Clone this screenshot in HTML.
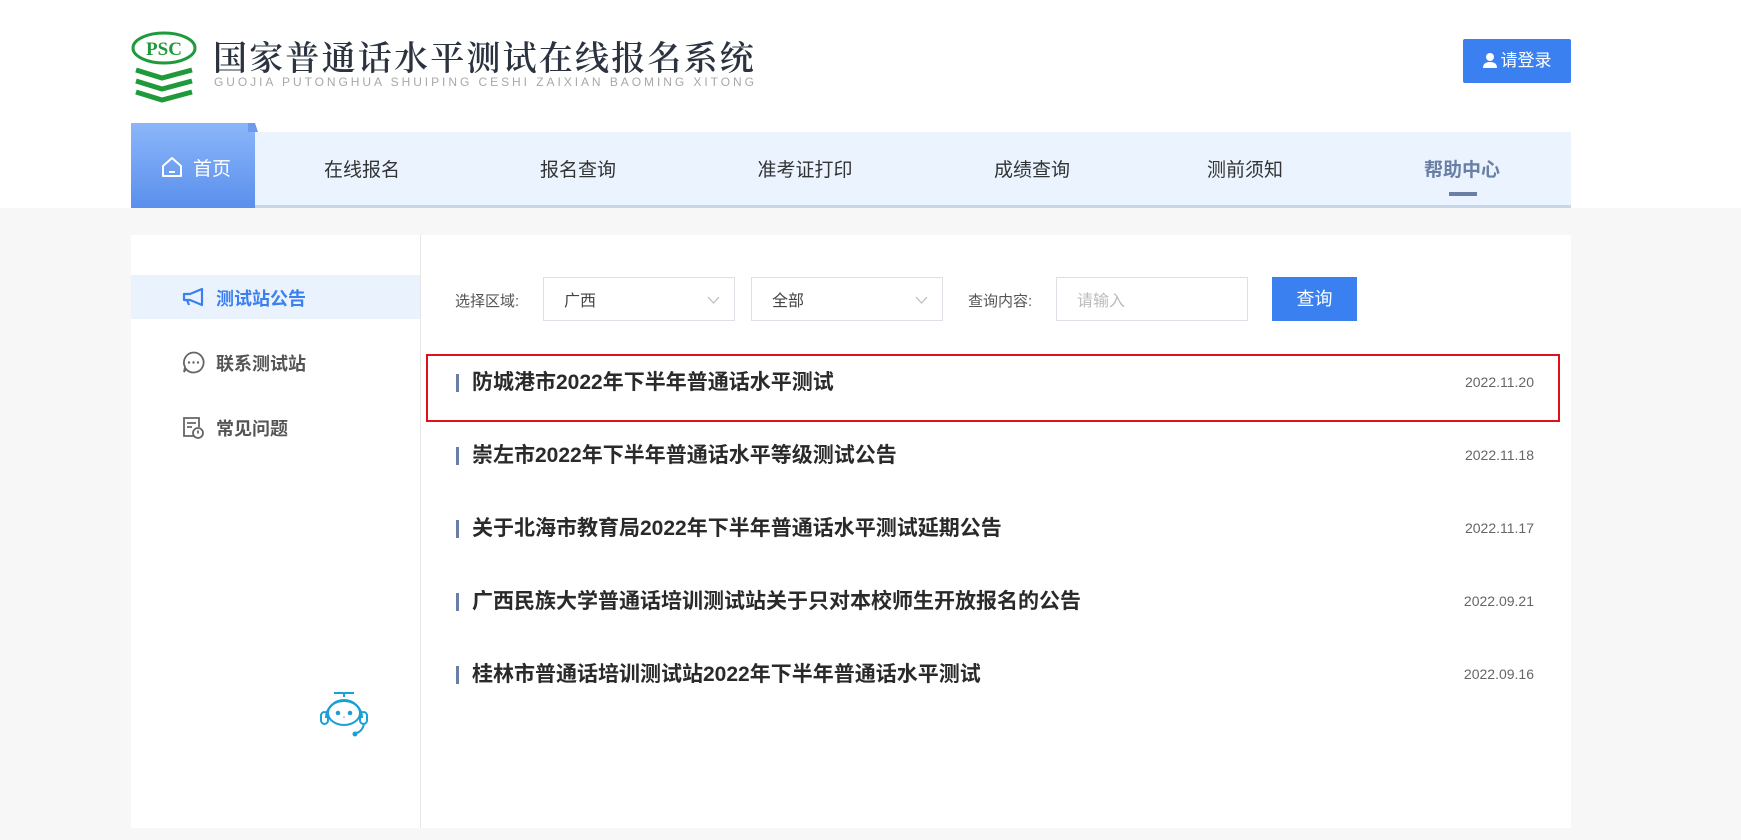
<!DOCTYPE html>
<html><head><meta charset="utf-8">
<style>
*{margin:0;padding:0;box-sizing:border-box}
body{width:1741px;height:840px;background:#f7f7f7;font-family:"Liberation Sans","Noto Sans CJK SC",sans-serif;position:relative;overflow:hidden;color:#333}
.top{position:absolute;left:0;top:0;width:1741px;height:208px;background:#fff}
.abs{position:absolute}
.title{left:213px;top:35px;font-size:34px;letter-spacing:2.2px;color:#2b3340;white-space:nowrap;font-family:"Noto Serif CJK SC","Noto Sans CJK SC",serif;font-weight:600;line-height:42px}
.sub{left:214px;top:75px;font-size:12px;letter-spacing:2.95px;color:#a8a8a8;white-space:nowrap}
.login{left:1463px;top:39px;width:108px;height:44px;background:#3a80f0;border-radius:2px;color:#fff;font-size:17px;line-height:44px;text-align:center}
.nav{left:131px;top:132px;width:1440px;height:76px;background:#ebf4fe;border-bottom:3px solid #c7d6e6}
.home{left:131px;top:123px;width:124px;height:85px;background:linear-gradient(#8cb6fa,#5a8fec);color:#fff;font-size:19px}
.navi{top:155px;font-size:19px;color:#333;white-space:nowrap;transform:translateX(-50%)}
.panel{left:131px;top:235px;width:1440px;height:593px;background:#fff}
.side{left:131px;top:235px;width:290px;height:593px;border-right:1px solid #e6e6e6}
.si{left:131px;width:289px;height:44px;font-size:18px;font-weight:bold;color:#555}
.si span{position:absolute;left:85px;top:10px}
.lbl{font-size:15px;color:#555;top:290px}
.sel{top:277px;height:44px;border:1px solid #dcdfe6;background:#fff;font-size:16px;color:#444;padding:9px 20px}
.btn{left:1272px;top:277px;width:85px;height:44px;background:#3a80f0;color:#fff;font-size:18px;text-align:center;line-height:44px}
.row{left:456px;width:1078px;height:30px}
.row .bar{position:absolute;left:0;top:6px;width:3px;height:18px;background:#6a7fa6}
.row .t{position:absolute;left:16px;top:0;font-size:21px;font-weight:bold;color:#2a2a2a;white-space:nowrap;line-height:30px}
.row .d{position:absolute;right:0;top:6px;font-size:14px;color:#666}
</style></head><body>
<div class="top"></div>
<svg class="abs" style="left:131px;top:31px" width="66" height="72" viewBox="0 0 66 72">
<ellipse cx="33" cy="17" rx="31" ry="15" fill="none" stroke="#1f9a3a" stroke-width="3"/>
<text x="33" y="24" text-anchor="middle" font-family="Liberation Serif" font-weight="bold" font-size="19" fill="#1f9a3a">PSC</text>
<g stroke="#1f9a3a" stroke-width="5" fill="none">
<path d="M5 39 L31 47 L61 39"/><path d="M5 50 L31 58 L61 50"/><path d="M5 61 L31 69 L61 61"/>
</g></svg>
<div class="abs title">国家普通话水平测试在线报名系统</div>
<div class="abs sub">GUOJIA PUTONGHUA SHUIPING CESHI ZAIXIAN BAOMING XITONG</div>
<div class="abs login"><svg width="14" height="15" viewBox="0 0 14 15" style="vertical-align:-2px;margin-right:4px"><circle cx="7" cy="4" r="4" fill="#fff"/><path d="M0 15 Q0 9 7 9 Q14 9 14 15Z" fill="#fff"/></svg>请登录</div>
<div class="abs nav"></div>
<div class="abs home">
<svg class="abs" style="left:117px;top:0" width="10" height="9"><path d="M0 0 L7 0 L10 9 L0 9Z" fill="#6d9bea"/></svg>
<svg class="abs" style="left:30px;top:33px" width="22" height="22" viewBox="0 0 22 22"><path d="M2 10 L11 2 L20 10 L20 20 L2 20Z" fill="none" stroke="#fff" stroke-width="2" stroke-linejoin="round"/><path d="M8 16h6" stroke="#fff" stroke-width="2"/></svg>
<span class="abs" style="left:62px;top:31px">首页</span></div>
<div class="abs navi" style="left:362px">在线报名</div>
<div class="abs navi" style="left:578px">报名查询</div>
<div class="abs navi" style="left:805px">准考证打印</div>
<div class="abs navi" style="left:1032px">成绩查询</div>
<div class="abs navi" style="left:1245px">测前须知</div>
<div class="abs navi" style="left:1462px;font-weight:bold;color:#6a7fa6">帮助中心</div>
<div class="abs" style="left:1449px;top:192px;width:28px;height:4px;background:#6a7fa6"></div>

<div class="abs panel"></div>
<div class="abs side"></div>
<div class="abs si" style="top:275px;background:#eaf2fd;color:#3a80f0">
<svg class="abs" style="left:51px;top:12px" width="22" height="20" viewBox="0 0 22 20"><path d="M20 2 L20 18 L8 13 L2 13 L2 7 L8 7Z" fill="none" stroke="#3a80f0" stroke-width="2.2" stroke-linejoin="round"/><path d="M5 13 L7 18" stroke="#3a80f0" stroke-width="2.2"/></svg><span>测试站公告</span></div>
<div class="abs si" style="top:340px">
<svg class="abs" style="left:51px;top:11px" width="23" height="23" viewBox="0 0 23 23"><path d="M11.5 1.5 A10 10 0 1 1 4 18 L2 21 L3 16 A10 10 0 0 1 11.5 1.5Z" fill="none" stroke="#666" stroke-width="1.8"/><circle cx="7" cy="11.5" r="1.2" fill="#666"/><circle cx="11.5" cy="11.5" r="1.2" fill="#666"/><circle cx="16" cy="11.5" r="1.2" fill="#666"/></svg><span>联系测试站</span></div>
<div class="abs si" style="top:405px">
<svg class="abs" style="left:51px;top:11px" width="22" height="23" viewBox="0 0 22 23"><path d="M13 20 L2 20 L2 2 L17 2 L17 11" fill="none" stroke="#666" stroke-width="1.8"/><path d="M5 7h9M5 11h5" stroke="#666" stroke-width="1.8"/><circle cx="16" cy="17" r="5" fill="#fff" stroke="#666" stroke-width="1.8"/><path d="M16 14.5v3" stroke="#666" stroke-width="1.8"/></svg><span>常见问题</span></div>
<svg class="abs" style="left:320px;top:692px" width="60" height="50" viewBox="0 0 60 50">
<g fill="none" stroke="#1aa0d4" stroke-width="2"><path d="M14 1h20"/><path d="M24 1v4"/><ellipse cx="24" cy="21" rx="16" ry="12"/><path d="M6 26 A18 18 0 0 1 42 26"/><rect x="1" y="20" width="7" height="12" rx="3.5"/><rect x="40" y="20" width="7" height="12" rx="3.5"/><path d="M44 32 Q42 40 36 41"/></g>
<circle cx="35" cy="42" r="2.5" fill="#1aa0d4"/><circle cx="18" cy="21" r="2.3" fill="#1aa0d4"/><circle cx="30" cy="21" r="2.3" fill="#1aa0d4"/><circle cx="24" cy="25" r="0.8" fill="#e66"/></svg>

<div class="abs lbl" style="left:455px">选择区域:</div>
<div class="abs sel" style="left:543px;width:192px">广西<svg class="abs" style="right:14px;top:18px" width="13" height="8"><path d="M1 1 L6.5 7 L12 1" fill="none" stroke="#bbb" stroke-width="1.2"/></svg></div>
<div class="abs sel" style="left:751px;width:192px">全部<svg class="abs" style="right:14px;top:18px" width="13" height="8"><path d="M1 1 L6.5 7 L12 1" fill="none" stroke="#bbb" stroke-width="1.2"/></svg></div>
<div class="abs lbl" style="left:968px">查询内容:</div>
<div class="abs sel" style="left:1056px;width:192px;color:#bbb">请输入</div>
<div class="abs btn">查询</div>

<div class="abs" style="left:426px;top:354px;width:1134px;height:68px;border:2px solid #e0101a"></div>
<div class="abs row" style="top:368px"><div class="bar"></div><div class="t">防城港市2022年下半年普通话水平测试</div><div class="d">2022.11.20</div></div>
<div class="abs row" style="top:441px"><div class="bar"></div><div class="t">崇左市2022年下半年普通话水平等级测试公告</div><div class="d">2022.11.18</div></div>
<div class="abs row" style="top:514px"><div class="bar"></div><div class="t">关于北海市教育局2022年下半年普通话水平测试延期公告</div><div class="d">2022.11.17</div></div>
<div class="abs row" style="top:587px"><div class="bar"></div><div class="t">广西民族大学普通话培训测试站关于只对本校师生开放报名的公告</div><div class="d">2022.09.21</div></div>
<div class="abs row" style="top:660px"><div class="bar"></div><div class="t">桂林市普通话培训测试站2022年下半年普通话水平测试</div><div class="d">2022.09.16</div></div>
</body></html>
